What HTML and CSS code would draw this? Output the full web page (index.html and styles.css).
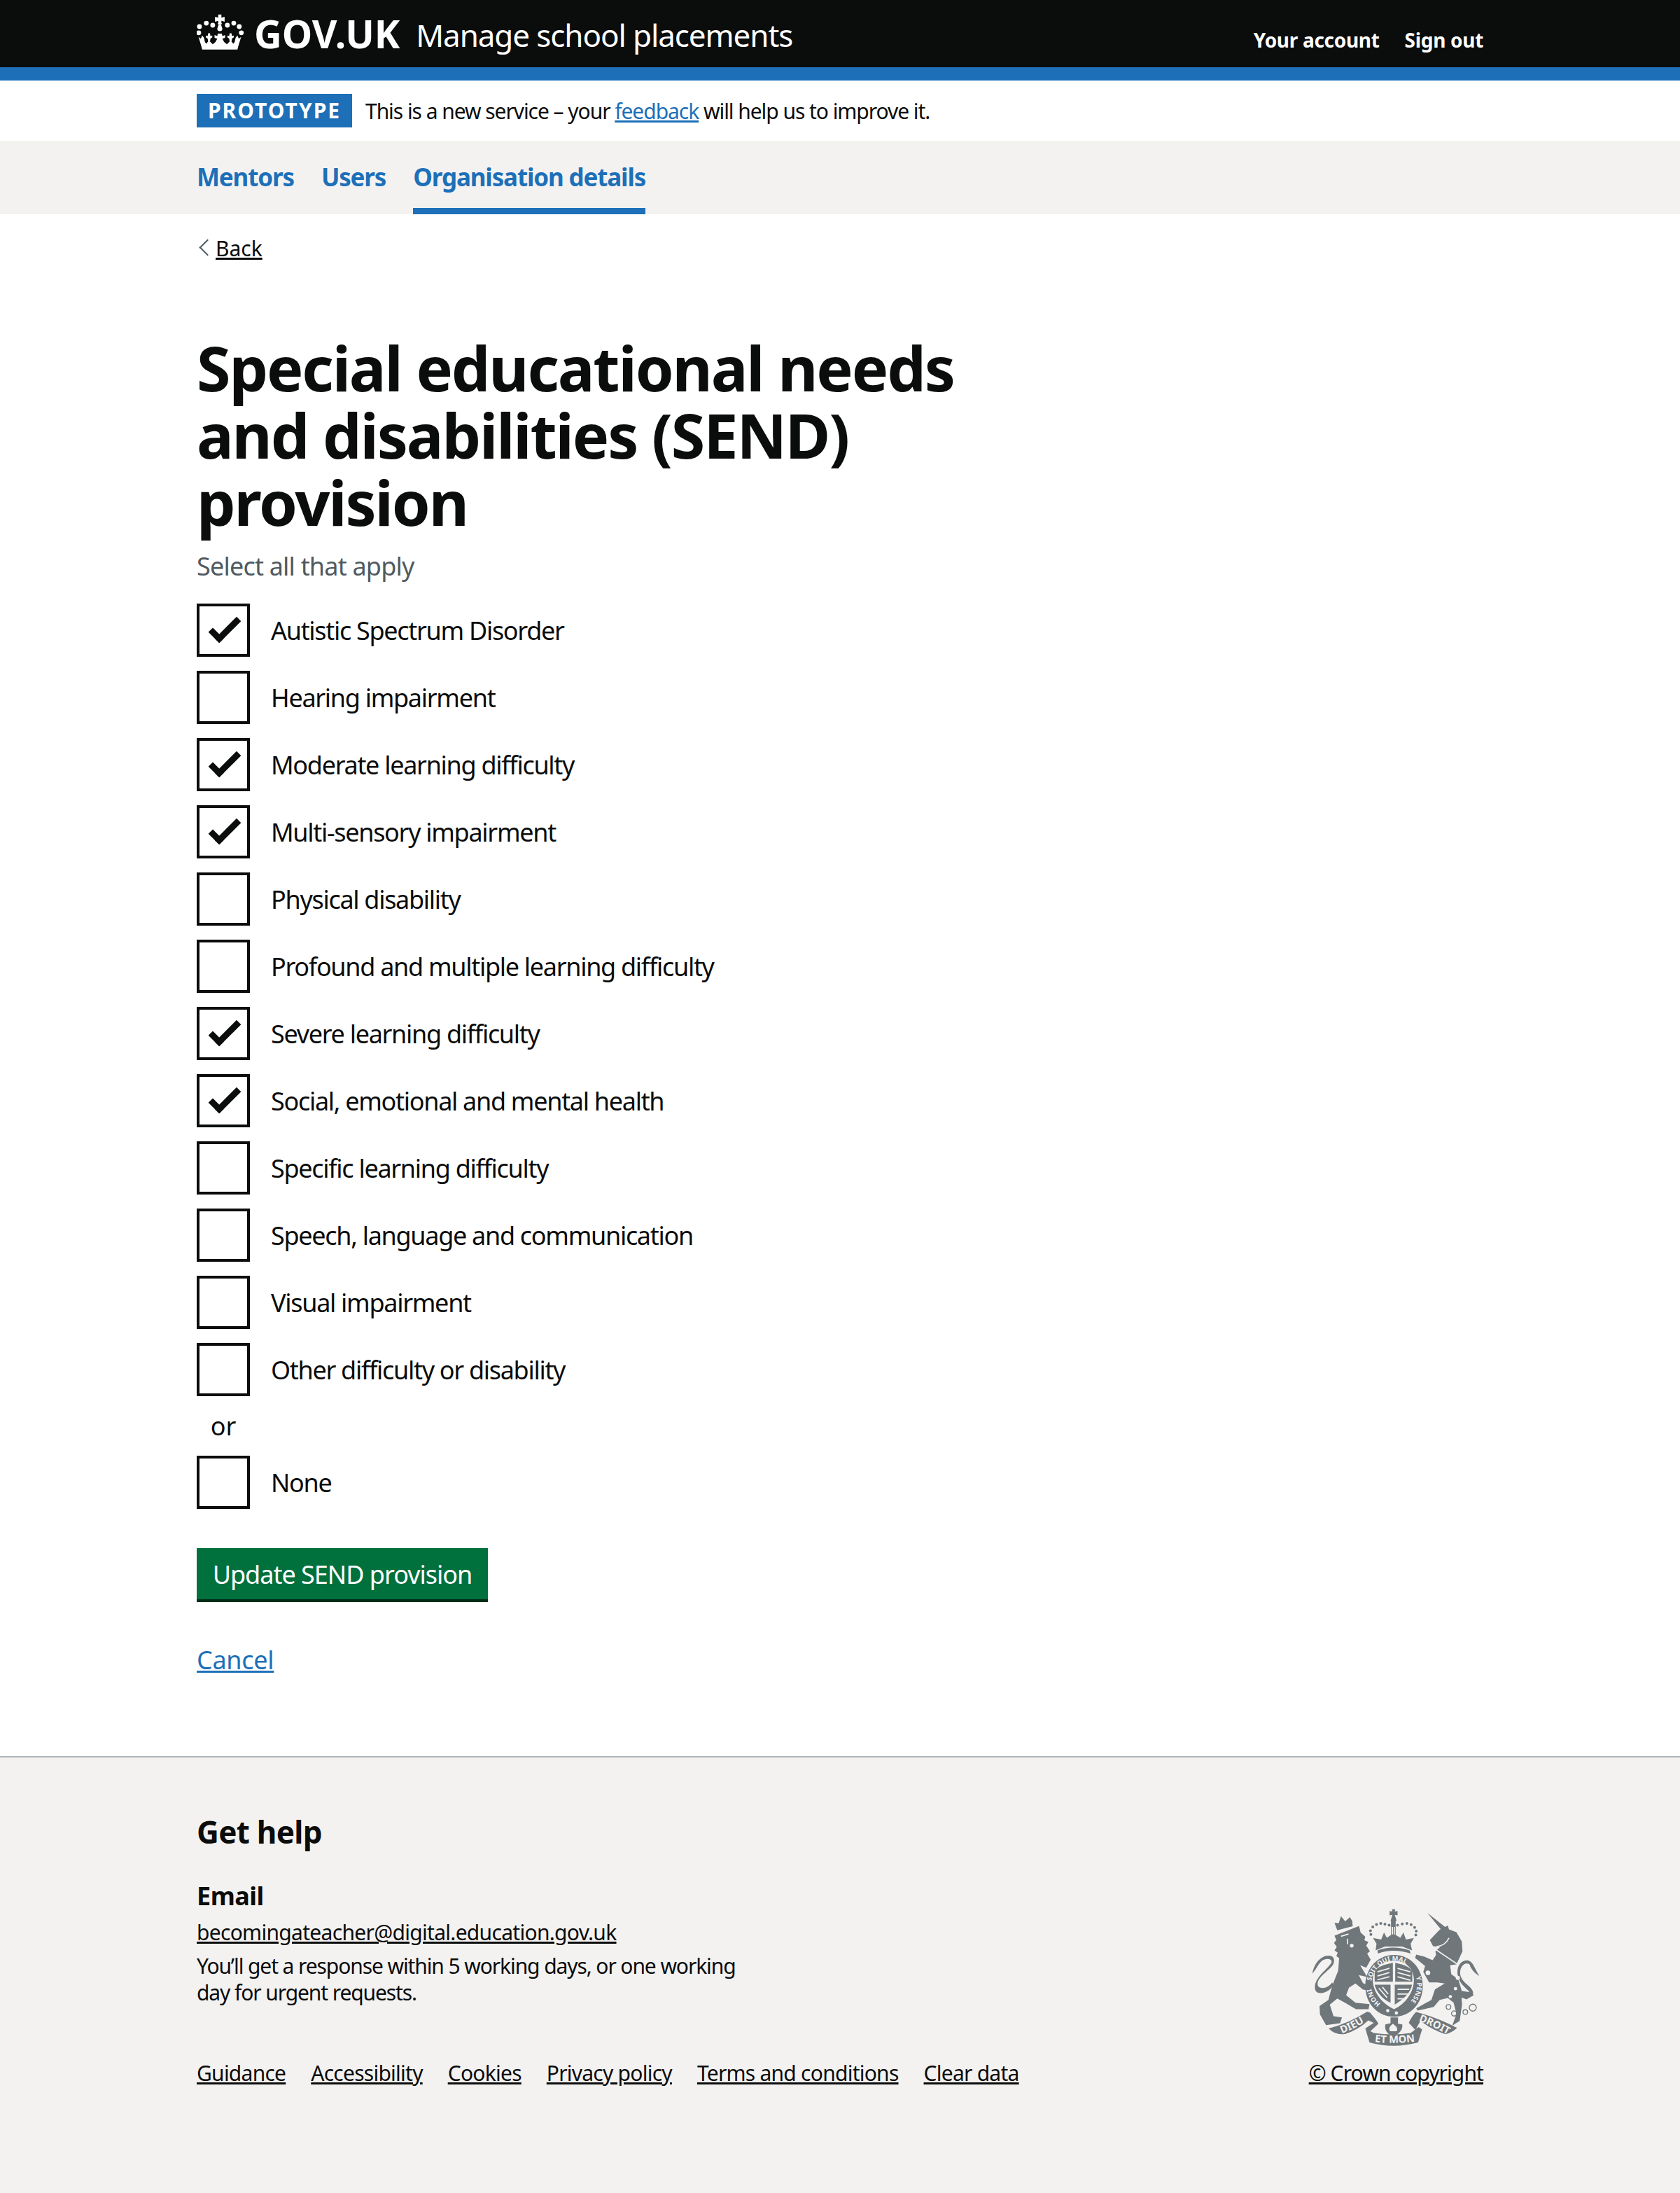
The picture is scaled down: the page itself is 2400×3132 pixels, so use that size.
FILE: index.html
```html
<!DOCTYPE html>
<html>
<head>
    <title>Special educational needs and disabilities (SEND) provision</title>
    <link rel="stylesheet" href="styles.css">
</head>
<body>
    <header class="header">
        <div class="container header-row">
            <div class="logo">
                <svg class="crown" viewBox="35 28 206 156" fill="#fff">
                    <circle cx="46" cy="83" r="10.5"/><circle cx="76" cy="68" r="10.5"/><circle cx="104" cy="77" r="10.5"/>
                    <circle cx="168" cy="77" r="10.5"/><circle cx="196" cy="68" r="10.5"/><circle cx="220" cy="83" r="10.5"/>
                    <circle cx="43" cy="110" r="10.5"/><circle cx="229" cy="110" r="10.5"/>
                    <path d="M128 30H142V44L156 40V62L142 58V66L145 72H125L128 66V58L114 62V40L128 44Z"/>
                    <path d="M130 72H140L146 92A11 11 0 1 1 124 92Z"/>
                    <path d="M42 128L52 136L58 122L66 132L70 150L76 158L84 148L82 136L74 130V122L82 124L84 112H92L94 124L102 122V130L94 136L92 148L104 160L116 150L124 136L112 132V120L124 124L126 114H144L146 124L158 120V132L146 136L154 150L166 160L178 148L176 136L168 130V122L176 124L178 112H186L188 124L196 122V130L188 136L186 148L194 158L200 150L204 132L212 122L218 136L228 128L216 168L212 183H58L54 168Z"/>
                </svg>
                <span class="logo-text">GOV.UK</span>
            </div>
            <span class="service-name">Manage school placements</span>
            <nav class="account-nav">
                <a href="#">Your account</a>
                <a href="#">Sign out</a>
            </nav>
        </div>
    </header>

    <div class="container phase-banner">
        <strong class="phase-tag">PROTOTYPE</strong>
        <span>This is a new service – your <a class="link" href="#">feedback</a> will help us to improve it.</span>
    </div>

    <nav class="primary-nav">
        <div class="container primary-nav-row">
            <a href="#">Mentors</a>
            <a href="#">Users</a>
            <a class="active" href="#">Organisation details</a>
        </div>
    </nav>

    <main class="container main">
        <a class="back-link" href="#">Back</a>

        <h1>Special educational needs<br>and disabilities (SEND)<br>provision</h1>
        <p class="hint">Select all that apply</p>

        <form>
            <div class="item"><span class="box checked"></span><label>Autistic Spectrum Disorder</label></div>
            <div class="item"><span class="box"></span><label>Hearing impairment</label></div>
            <div class="item"><span class="box checked"></span><label>Moderate learning difficulty</label></div>
            <div class="item"><span class="box checked"></span><label>Multi-sensory impairment</label></div>
            <div class="item"><span class="box"></span><label>Physical disability</label></div>
            <div class="item"><span class="box"></span><label>Profound and multiple learning difficulty</label></div>
            <div class="item"><span class="box checked"></span><label>Severe learning difficulty</label></div>
            <div class="item"><span class="box checked"></span><label>Social, emotional and mental health</label></div>
            <div class="item"><span class="box"></span><label>Specific learning difficulty</label></div>
            <div class="item"><span class="box"></span><label>Speech, language and communication</label></div>
            <div class="item"><span class="box"></span><label>Visual impairment</label></div>
            <div class="item"><span class="box"></span><label>Other difficulty or disability</label></div>
            <div class="divider">or</div>
            <div class="item"><span class="box"></span><label>None</label></div>
            <button class="button" type="button">Update SEND provision</button>
        </form>

        <a class="link cancel" href="#">Cancel</a>
    </main>

    <footer class="footer">
        <div class="container footer-row">
            <div class="footer-main">
                <h2>Get help</h2>
                <h3>Email</h3>
                <a class="footer-link email" href="#">becomingateacher@digital.education.gov.uk</a>
                <p class="footer-text">You’ll get a response within 5 working days, or one working<br>day for urgent requests.</p>
                <div class="footer-links">
                    <a class="footer-link" href="#">Guidance</a>
                    <a class="footer-link" href="#">Accessibility</a>
                    <a class="footer-link" href="#">Cookies</a>
                    <a class="footer-link" href="#">Privacy policy</a>
                    <a class="footer-link" href="#">Terms and conditions</a>
                    <a class="footer-link" href="#">Clear data</a>
                </div>
            </div>
            <div class="footer-meta">
                <svg class="crest" viewBox="400 80 725 590">
                    <defs>
                        <path id="garter-top" d="M657 405A98 103 0 0 1 853 405"/>
                        <path id="garter-right" d="M848 368A98 105 0 0 1 780 505"/>
                        <path id="garter-left" d="M698 486A98 105 0 0 1 655 396"/>
                        <path id="ribbon-left" d="M532 614Q590 592 650 552"/>
                        <path id="ribbon-mid" d="M672 650Q750 660 846 648"/>
                        <path id="ribbon-right" d="M860 560Q920 582 990 622"/>
                    </defs>
                    <g fill="#6f777b">
                        <!-- lion -->
                        <path d="M500 195L605 154L612 182L632 200L628 215L645 222L636 238L652 262L640 272L655 298L636 332L610 322L640 372L604 364L622 398L656 414L662 432L622 426L590 400L562 418L550 450L590 482L650 488L646 510L592 510L545 482L512 464L480 490L496 540L532 545L524 570L464 578L438 532L436 496L474 470L490 410L516 345L520 292L508 282L514 268L500 258L510 244L498 226L508 214Z"/>
                        <path d="M512 172L500 140L518 142L528 112L546 134L566 116L576 132L578 155Z"/>
                        <path d="M405 358C412 320 435 282 475 281C500 280 505 305 490 325C470 350 425 375 428 405C430 425 470 425 490 395L496 405C475 445 425 450 418 428C405 380 470 340 486 312C494 295 470 290 450 300C432 312 425 335 405 358Z"/>
                        <!-- unicorn -->
                        <path d="M897 97L976 160L962 176Z"/>
                        <path d="M908 214L950 170L985 152L990 168L1022 180L1045 220L1048 262L1022 318L995 322L1000 360L1030 382L1045 432L1088 438L1096 450L1065 468L1044 460L1046 490L1036 560L1004 580L1022 530L1010 482L985 462L950 470L925 500L856 516L850 506L915 470L930 425L972 400L940 395L905 395L880 350L888 325L845 290L850 276L885 285L920 300L935 278L932 262L952 244L922 240Z"/>
                        <path d="M1028 365C1020 325 1045 295 1075 302C1095 310 1100 335 1120 368C1100 355 1085 340 1078 318C1060 305 1035 325 1038 360C1045 400 1090 410 1094 440L1085 450C1080 425 1035 410 1028 365Z"/>
                        <!-- crown -->
                        <path d="M736 90L748 92L746 82H760L758 92L770 90V108L758 106L766 132H762V192L782 204L795 182L806 212L840 205L826 230L832 258L790 242H716L676 258L680 230L665 205L700 212L712 182L724 204L742 192V132H740L748 106L736 108Z"/>
                        <path d="M684 258Q750 235 822 258L826 272Q750 248 686 272Z"/>
                        <circle cx="656" cy="190" r="6"/><circle cx="654" cy="174" r="6"/><circle cx="664" cy="158" r="6"/><circle cx="680" cy="147" r="6"/><circle cx="698" cy="143" r="6"/><circle cx="716" cy="146" r="6"/><circle cx="734" cy="150" r="6"/>
                        <circle cx="770" cy="150" r="6"/><circle cx="790" cy="145" r="6"/><circle cx="810" cy="143" r="6"/><circle cx="828" cy="148" r="6"/><circle cx="843" cy="160" r="6"/><circle cx="850" cy="176" r="6"/><circle cx="848" cy="192" r="6"/>
                        <!-- garter -->
                        <path fill-rule="evenodd" d="M755 278C830 278 878 340 878 410C878 490 820 542 755 542C690 542 632 490 632 410C632 340 680 278 755 278ZM755 302C700 302 664 340 664 385C664 440 710 490 755 510C800 490 840 440 840 385C840 340 810 302 755 302Z"/>
                        <!-- shield quarters -->
                        <path d="M672 392V345C684 328 715 318 750 311V392Z"/>
                        <path d="M760 311C795 318 822 328 833 348V392H760Z"/>
                        <path d="M672 405H740V482C710 470 680 440 672 405Z"/>
                        <path d="M758 405H832C826 440 795 468 758 490Z"/>
                        <!-- motto ribbons -->
                        <path d="M475 592Q560 570 640 520L652 524C670 545 682 560 688 572L652 606L632 592L668 568L645 558Q600 600 545 616Q505 622 475 592Z"/>
                        <path d="M632 592L668 612Q750 624 826 612L860 586L875 596L858 652Q750 680 650 652Z"/>
                        <path d="M1025 590Q1000 612 975 617Q920 600 868 560L850 592L872 596L858 612L818 568C830 545 840 530 850 522Q940 545 1025 590Z"/>
                        <path d="M740 545H772V572L790 575C795 600 770 622 752 622C730 622 712 600 718 575L740 570Z"/>
                    </g>
                    <g fill="none" stroke="#f3f2f1" stroke-width="5">
                        <path d="M684 350L735 335M684 368L735 353M684 384L735 371M770 335L825 350M770 353L825 368M770 371L825 386M770 425L820 425M770 445L815 445M770 465L800 465"/>
                        <path d="M690 420L725 460M705 415L730 445"/>
                        <path d="M930 252L1024 316M937 242Q975 238 990 205"/>
                        <path d="M528 198L560 188M556 208V232M748 158V190M756 158V190"/>
                    </g>
                    <g fill="#f3f2f1">
                        <circle cx="728" cy="516" r="7"/><circle cx="765" cy="526" r="7"/>
                        <circle cx="910" cy="272" r="11"/><circle cx="900" cy="354" r="10"/>
                        <circle cx="1028" cy="376" r="9"/><circle cx="1018" cy="422" r="7"/><circle cx="996" cy="456" r="7"/>
                        <circle cx="574" cy="238" r="8"/>
                        <path d="M750 572C738 582 730 590 738 604H766C774 590 762 582 750 572Z"/>
                    </g>
                    <g fill="none" stroke="#6f777b" stroke-width="4">
                        <circle cx="988" cy="500" r="10"/><circle cx="1012" cy="528" r="11"/><circle cx="1060" cy="522" r="10"/><circle cx="1092" cy="503" r="15"/>
                    </g>
                    <g class="crest-text">
                        <text class="garter-text"><textPath href="#garter-top" startOffset="5%">SOIT QUI MAL</textPath></text>
                        <text class="garter-text"><textPath href="#garter-right" startOffset="2%">Y PENSE</textPath></text>
                        <text class="garter-text"><textPath href="#garter-left">HONI</textPath></text>
                        <text><textPath href="#ribbon-left">DIEU</textPath></text>
                        <text><textPath href="#ribbon-mid">ET MON</textPath></text>
                        <text><textPath href="#ribbon-right">DROIT</textPath></text>
                    </g>
                </svg>
                <a class="footer-link" href="#">© Crown copyright</a>
            </div>
        </div>
    </footer>
</body>
</html>
```

FILE: styles.css
```css
body {
    margin: 0;
    min-height: 100vh;
    display: flex;
    flex-direction: column;
    font-family: "Noto Sans", Arial, sans-serif;
    color: #0b0c0c;
    background-color: #fff;
}

a {
    color: inherit;
}

.container {
    box-sizing: border-box;
    width: 1838px;
    margin-left: 281px;
}

/* header */
.header {
    height: 96px;
    background-color: #0b0c0c;
    border-bottom: 19px solid #1d70b8;
    color: #fff;
}

.header-row {
    display: flex;
    align-items: center;
    height: 96px;
}

.logo {
    display: flex;
    align-items: center;
    margin-top: -1px;
}

.crown {
    width: 68px;
    height: 51px;
    margin-top: -4px;
}

.logo-text {
    margin-left: 14px;
    font-size: 55px;
    font-weight: 700;
}

.service-name {
    margin-left: 23px;
    font-size: 44px;
    letter-spacing: -1.1px;
    margin-top: 3px;
}

.account-nav {
    display: flex;
    gap: 36px;
    margin-left: auto;
    margin-top: 17px;
}

.account-nav a {
    font-size: 28px;
    font-weight: 700;
    letter-spacing: -0.3px;
    text-decoration: none;
}

/* phase banner */
.phase-banner {
    display: flex;
    align-items: center;
    height: 86px;
    font-size: 30px;
    letter-spacing: -1.05px;
}

.phase-tag {
    box-sizing: border-box;
    width: 222px;
    height: 48px;
    margin-right: 19px;
    line-height: 48px;
    text-align: center;
    font-size: 30px;
    letter-spacing: 2px;
    color: #fff;
    background-color: #1d70b8;
}

.link {
    color: #1d70b8;
}

/* service nav */
.primary-nav {
    height: 105px;
    background-color: #f3f2f1;
}

.primary-nav-row {
    display: flex;
    gap: 39px;
    height: 105px;
}

.primary-nav a {
    box-sizing: border-box;
    height: 105px;
    padding-top: 28px;
    font-size: 35px;
    font-weight: 700;
    letter-spacing: -1.15px;
    color: #1d70b8;
    text-decoration: none;
}

.primary-nav a.active {
    border-bottom: 9px solid #1d70b8;
}

/* main */
.main {
    height: 2202px;
}

.back-link {
    display: block;
    position: relative;
    height: 40px;
    margin-top: 29px;
    padding-left: 27px;
    line-height: 40px;
    font-size: 30px;
}

.back-link::before {
    content: "";
    position: absolute;
    left: 7px;
    top: 10px;
    width: 15px;
    height: 15px;
    border-left: 2px solid #505a5f;
    border-bottom: 2px solid #505a5f;
    transform: rotate(45deg);
}

h1 {
    margin: 102px 0 0;
    font-size: 88px;
    line-height: 96px;
    font-weight: 700;
    letter-spacing: -2.1px;
}

.hint {
    height: 50px;
    margin: 19px 0 28px;
    font-size: 36px;
    line-height: 50px;
    letter-spacing: -0.8px;
    color: #505a5f;
}

.item {
    display: flex;
    align-items: center;
    height: 76px;
    margin-bottom: 20px;
    font-size: 36px;
}

.item label {
    margin-left: 30px;
    letter-spacing: -1.3px;
}

.box {
    position: relative;
    box-sizing: border-box;
    flex: none;
    width: 76px;
    height: 76px;
    border: 4px solid #0b0c0c;
}

.box.checked::after {
    content: "";
    position: absolute;
    left: 14px;
    top: 18px;
    box-sizing: border-box;
    width: 44px;
    height: 22px;
    border-left: 9px solid #0b0c0c;
    border-bottom: 9px solid #0b0c0c;
    transform: rotate(-45deg);
}

.divider {
    width: 76px;
    height: 45px;
    margin-bottom: 20px;
    line-height: 45px;
    text-align: center;
    font-size: 36px;
}

.button {
    display: block;
    width: 416px;
    height: 73px;
    margin: 56px 0 4px;
    padding: 2px 0 0;
    border: 0;
    font-family: inherit;
    font-size: 36px;
    letter-spacing: -1px;
    color: #fff;
    background-color: #00703c;
    box-shadow: 0 4px 0 #002d18;
}

.cancel {
    display: block;
    width: fit-content;
    margin-top: 62px;
    line-height: 50px;
    font-size: 36px;
    letter-spacing: -0.3px;
}

/* footer */
.footer {
    flex-grow: 1;
    border-top: 2px solid #b1b4b6;
    background-color: #f3f2f1;
}

.footer-row {
    display: flex;
    justify-content: space-between;
    align-items: flex-end;
    padding-top: 76px;
}

.footer h2 {
    margin: 0 0 37px;
    font-size: 44px;
    line-height: 60px;
    font-weight: 700;
    letter-spacing: -0.7px;
}

.footer h3 {
    margin: 0 0 7px;
    font-size: 36px;
    line-height: 50px;
    font-weight: 700;
    letter-spacing: -0.5px;
}

.footer-link {
    font-size: 30px;
    line-height: 40px;
    letter-spacing: -0.9px;
    color: #0b0c0c;
}

.email {
    display: block;
    width: fit-content;
    letter-spacing: -0.7px;
}

.footer-text {
    margin: 9px 0 76px;
    font-size: 30px;
    line-height: 38px;
    letter-spacing: -1.1px;
}

.footer-links {
    display: flex;
    gap: 36px;
}

.footer-links .footer-link {
    letter-spacing: -0.75px;
}

.footer-meta {
    display: flex;
    flex-direction: column;
    align-items: center;
    gap: 18px;
}

.crest {
    width: 242px;
    height: 197px;
}

.crest-text {
    font-family: "Noto Sans", Arial, sans-serif;
    font-size: 44px;
    font-weight: 700;
    fill: #f3f2f1;
}

.garter-text {
    font-size: 28px;
}
```
